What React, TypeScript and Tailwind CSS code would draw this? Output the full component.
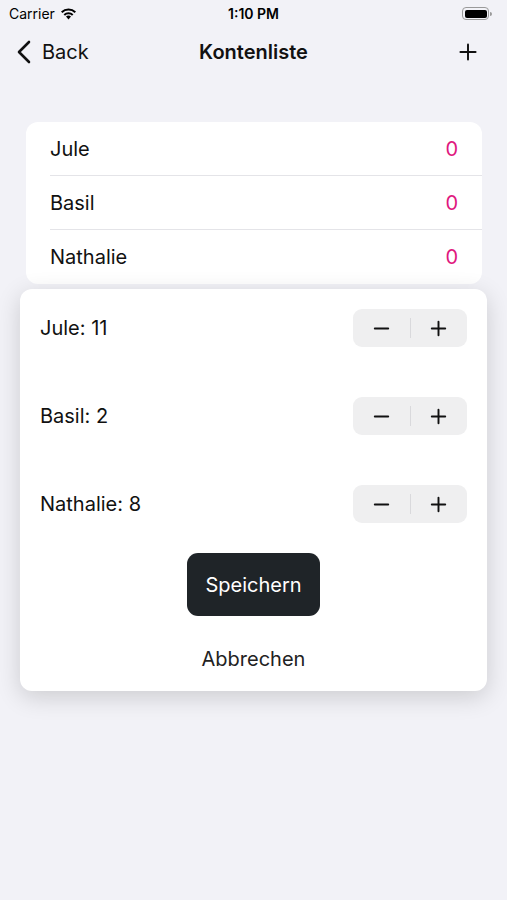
import { Plus, Minus } from "lucide-react";

const accounts = [
  { name: "Jule", value: 0, draft: 11 },
  { name: "Basil", value: 0, draft: 2 },
  { name: "Nathalie", value: 0, draft: 8 },
];

function StatusBar() {
  return (
    <div className="relative flex h-[27px] items-center justify-between px-[9px] text-[14px] text-black">
      <div className="flex items-center gap-[5px]">
        <span>Carrier</span>
        {/* wifi */}
        <svg width="17" height="12" viewBox="0 0 17 12">
          <path d="M8.5 11.5 L6 8.6 A3.6 3.6 0 0 1 11 8.6 Z" fill="#000" />
          <path d="M3.6 6.2 A7 7 0 0 1 13.4 6.2 L12 7.7 A5 5 0 0 0 5 7.7 Z" fill="#000" />
          <path d="M1 3.5 A10.8 10.8 0 0 1 16 3.5 L14.6 5 A8.8 8.8 0 0 0 2.4 5 Z" fill="#000" />
        </svg>
      </div>
      <span className="absolute left-1/2 -translate-x-1/2 font-semibold">1:10 PM</span>
      <div className="flex items-center pr-[6px]">
        <div className="flex h-[13px] w-[27px] items-center rounded-[4px] border border-[#9a9a9a] p-[1.5px]">
          <div className="h-full w-full rounded-[2px] bg-black" />
        </div>
        <div className="ml-[1px] h-[4px] w-[2px] rounded-r-sm bg-[#9a9a9a]" />
      </div>
    </div>
  );
}

function NavBar() {
  return (
    <div className="relative flex h-[50px] items-center justify-between pl-[16px] pr-[26px]">
      <div className="flex items-center gap-[10px] text-[20px] text-[#111]">
        <svg width="16" height="24" viewBox="0 0 16 24" fill="none">
          <path
            d="M13 2 L3 12 L13 22"
            stroke="#111"
            strokeWidth="2.6"
            strokeLinecap="round"
            strokeLinejoin="round"
          />
        </svg>
        <span>Back</span>
      </div>
      <span className="absolute left-1/2 -translate-x-1/2 text-[20px] font-semibold text-[#111]">
        Kontenliste
      </span>
      <Plus className="h-[26px] w-[26px] text-[#111]" strokeWidth={1.8} />
    </div>
  );
}

function Stepper() {
  return (
    <div className="flex h-[38px] w-[114px] items-center rounded-[9px] bg-[#efeff0]">
      <div className="flex flex-1 items-center justify-center">
        <Minus className="h-[23px] w-[23px] text-[#111]" strokeWidth={2} />
      </div>
      <div className="h-[20px] w-px bg-[#d9d9dc]" />
      <div className="flex flex-1 items-center justify-center">
        <Plus className="h-[23px] w-[23px] text-[#111]" strokeWidth={2} />
      </div>
    </div>
  );
}

export default function App() {
  return (
    <div
      className="flex min-h-[900px] w-full flex-col bg-[#f2f2f7]"
      style={{ fontFamily: "Inter, 'Noto Sans', sans-serif" }}
    >
      <StatusBar />
      <NavBar />

      <div className="ml-[26px] mr-[25px] mt-[45px] rounded-[12px] bg-white">
        {accounts.map((a, i) => (
          <div key={a.name} className="flex h-[54px] pl-[24px]">
            <div
              className={
                "flex flex-1 items-center justify-between pr-[24px] " +
                (i < accounts.length - 1 ? "border-b border-[#e4e4e8]" : "")
              }
            >
              <span className="text-[20px] text-[#111]">{a.name}</span>
              <span className="text-[20px] text-[#e0177e]">{a.value}</span>
            </div>
          </div>
        ))}
      </div>

      <div className="mx-[20px] mt-[5px] flex flex-col rounded-[12px] bg-white px-[20px] pb-[17px] pt-[20px] shadow-[0_6px_24px_rgba(0,0,0,0.16)]">
        <div className="flex flex-col gap-[50px]">
          {accounts.map((a) => (
            <div key={a.name} className="flex items-center justify-between">
              <span className="text-[20px] text-[#111]">
                {a.name}: {a.draft}
              </span>
              <Stepper />
            </div>
          ))}
        </div>
        <div className="mt-[30px] flex justify-center">
          <button className="flex h-[63px] w-[133px] items-center justify-center rounded-[11px] bg-[#1f2428] text-[20px] text-white">
            Speichern
          </button>
        </div>
        <div className="mt-[28px] flex justify-center">
          <span className="text-[20px] text-[#222]">Abbrechen</span>
        </div>
      </div>
    </div>
  );
}
